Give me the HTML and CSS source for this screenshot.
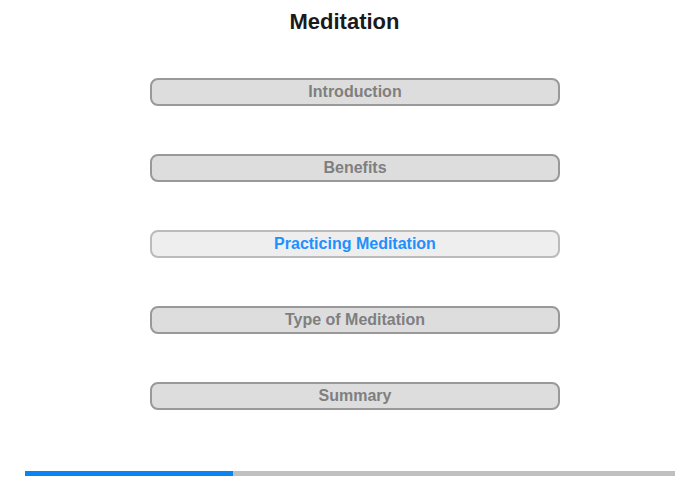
FILE: index.html
```html
<!DOCTYPE html>
<html>
<head>
  <title>Meditation</title>
  <link rel="stylesheet" href="styles.css">
</head>
<body>
  <div class="page">
    <h1 class="title">Meditation</h1>

    <div class="menu">
      <div class="item">Introduction</div>
      <div class="item">Benefits</div>
      <div class="item active">Practicing Meditation</div>
      <div class="item">Type of Meditation</div>
      <div class="item">Summary</div>
    </div>

    <div class="progress">
      <div class="fill" style="width: 32%"></div>
    </div>
  </div>
</body>
</html>
```

FILE: styles.css
```css
body {
  margin: 0;
  font-family: "Liberation Sans", Arial, sans-serif;
  background: #fff;
}

.page {
  width: 700px;
  height: 480px;
  display: flex;
  flex-direction: column;
  align-items: center;
}

.title {
  margin: 0 11px 0 0;
  padding-top: 9px;
  height: 78px;
  box-sizing: border-box;
  font-size: 22px;
  line-height: 26px;
  font-weight: bold;
  color: #1a1a1a;
}

.menu {
  margin-left: 10px;
  display: flex;
  flex-direction: column;
  gap: 48px;
}

.item {
  width: 410px;
  height: 28px;
  box-sizing: border-box;
  border: 2px solid #999;
  border-radius: 8px;
  background: #ddd;
  color: #7f7f7f;
  font-size: 16px;
  font-weight: bold;
  line-height: 24px;
  text-align: center;
}

.item.active {
  background: #eee;
  border-color: #bbb;
  color: #2090ff;
}

.progress {
  margin-top: 61px;
  width: 650px;
  height: 5px;
  background: #c0c0c0;
}

.fill {
  height: 100%;
  background: #0a84f0;
}
```
